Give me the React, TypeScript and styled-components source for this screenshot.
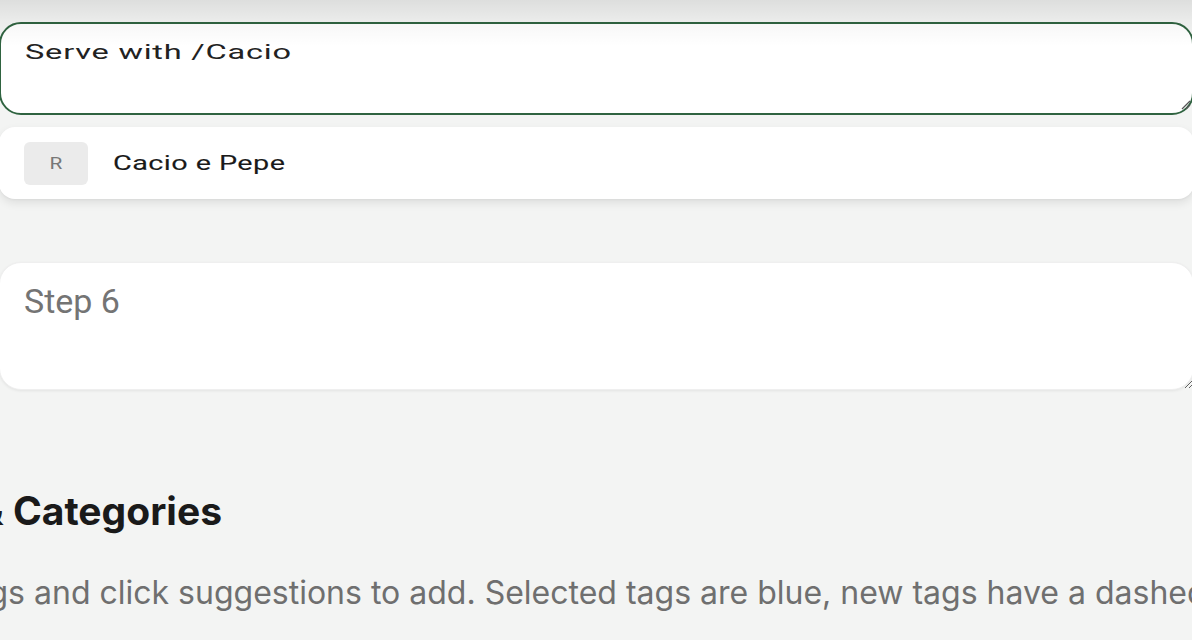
import React from "react";
import styled, { createGlobalStyle } from "styled-components";

const GlobalStyle = createGlobalStyle`
  html, body {
    margin: 0;
    padding: 0;
    background: #f3f4f3;
    overflow: hidden;
  }
  * {
    box-sizing: border-box;
  }
`;

const Page = styled.div`
  position: relative;
  width: 1192px;
  height: 640px;
  overflow: hidden;
  background: #f3f4f3;
  font-family: "Inter", "Roboto", sans-serif;
`;

// shadow of the sticky header that sits just above this crop
const HeaderShadow = styled.div`
  position: absolute;
  top: 0;
  left: 0;
  right: 0;
  height: 46px;
  background: linear-gradient(
    to bottom,
    rgba(0, 0, 0, 0.09),
    rgba(0, 0, 0, 0.035) 45%,
    rgba(0, 0, 0, 0)
  );
  pointer-events: none;
  z-index: 2;
`;

const Steps = styled.div`
  display: flex;
  flex-direction: column;
  margin: 0 -2px 0 -1px;
  padding-top: 22px;
`;

const StepShell = styled.div`
  position: relative;
  height: 93px;
  padding: 16px 24px;
  background: #fff;
  border: 2px solid #2f6340;
  border-radius: 22px;
`;

const StepText = styled.span`
  display: inline-block;
  font-family: "Roboto", sans-serif;
  font-size: 21px;
  letter-spacing: 0.5px;
  color: #222;
  transform: scaleX(1.55);
  transform-origin: left center;
`;

const Grip = styled.svg`
  position: absolute;
  right: 1px;
  bottom: 3px;
  width: 10px;
  height: 10px;
`;

const Suggestions = styled.div`
  margin-top: 12px;
  height: 72px;
  display: flex;
  align-items: center;
  gap: 25px;
  padding: 0 25px;
  background: #fff;
  border-radius: 16px;
  box-shadow: 0 4px 10px rgba(0, 0, 0, 0.09), 0 1px 2px rgba(0, 0, 0, 0.04);
`;

const Badge = styled.span`
  width: 64px;
  height: 43px;
  display: flex;
  align-items: center;
  justify-content: center;
  border-radius: 6px;
  background: #ebebeb;
  color: #777;
  font-family: "Roboto", sans-serif;
  font-size: 16px;
  & > span {
    display: inline-block;
    transform: scaleX(1.3);
  }
`;

const SuggestionLabel = styled.span`
  display: inline-block;
  font-family: "Roboto", sans-serif;
  font-size: 20px;
  font-weight: 400;
  letter-spacing: 0.3px;
  color: #1a1a1a;
  -webkit-text-stroke: 0.1px #1a1a1a;
  transform: scaleX(1.44);
  transform-origin: left center;
`;

const StepArea = styled.textarea`
  margin-top: 63px;
  height: 128px;
  padding: 18px 24px;
  background: #fff;
  border: 1px solid #efefef;
  border-radius: 22px;
  box-shadow: 0 1px 3px rgba(0, 0, 0, 0.07);
  font-family: "Roboto", sans-serif;
  font-size: 34px;
  color: #222;
  outline: none;
  resize: vertical;
  &::placeholder {
    color: #747474;
  }
`;

const Section = styled.section`
  margin-left: -124px;
  padding-top: 97px;
  white-space: nowrap;
`;

const SectionTitle = styled.h2`
  margin: 0;
  font-family: "Inter", sans-serif;
  font-size: 39px;
  font-weight: 700;
  line-height: 48px;
  color: #1a1a1a;
`;

const SectionHint = styled.p`
  margin: 38px 0 0;
  font-family: "Inter", sans-serif;
  font-size: 32px;
  line-height: 40px;
  color: #6f6f6f;
`;

export default function App() {
  return (
    <>
      <GlobalStyle />
      <Page>
        <HeaderShadow />
        <Steps>
          <StepShell>
            <StepText>Serve with /Cacio</StepText>
            <Grip viewBox="0 0 10 10">
              <path d="M9 1 L1 9 M9 5 L5 9" stroke="#555" strokeWidth="1.2" />
            </Grip>
          </StepShell>
          <Suggestions>
            <Badge>
              <span>R</span>
            </Badge>
            <SuggestionLabel>Cacio e Pepe</SuggestionLabel>
          </Suggestions>
          <StepArea placeholder="Step 6" />
        </Steps>
        <Section>
          <SectionTitle>Tags &amp; Categories</SectionTitle>
          <SectionHint>
            Type tags and click suggestions to add. Selected tags are blue, new
            tags have a dashed border.
          </SectionHint>
        </Section>
      </Page>
    </>
  );
}
